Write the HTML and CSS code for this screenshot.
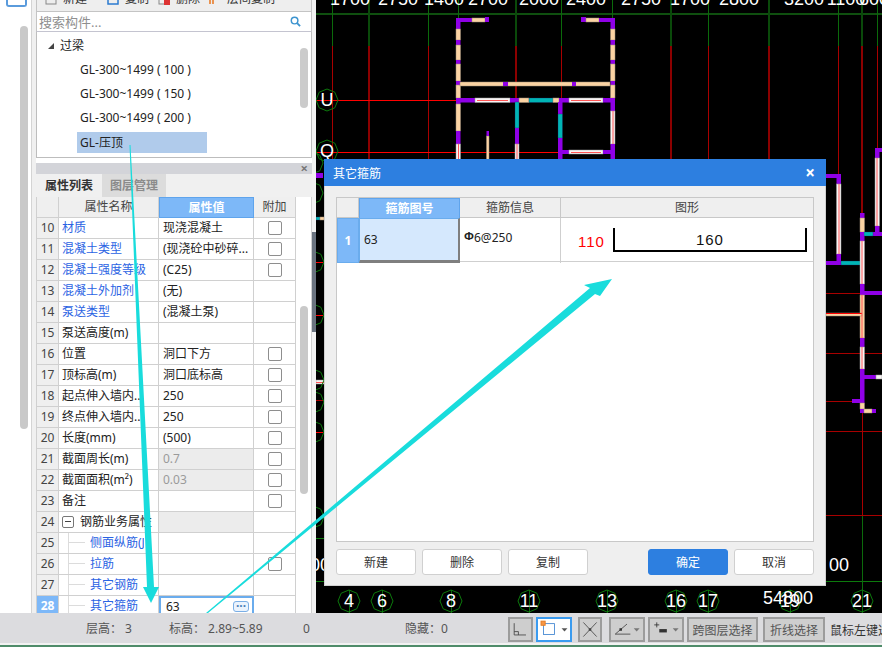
FILE: index.html
```html
<!DOCTYPE html>
<html lang="zh">
<head>
<meta charset="utf-8">
<title>其它箍筋</title>
<link rel="stylesheet" href="styles.css">
</head>
<body>
<div class="app">
  <div class="main">
    <div class="rail">
      <div class="rail-icon"></div>
      <div class="rail-thumb"></div>
    </div>
    <div class="panel">
      <div class="toolbar">
        <span class="tool tool-new"><svg class="ti" viewBox="0 0 12 12"><rect x="1" y="1" width="10" height="10" fill="none" stroke="#888"/></svg>新建</span>
        <span class="tool tool-copy"><svg class="ti" viewBox="0 0 12 12"><rect x="1" y="1" width="10" height="10" fill="none" stroke="#2a7ad0" stroke-width="1.5"/></svg>复制</span>
        <span class="tool tool-del"><svg class="ti" viewBox="0 0 12 12"><rect x="1" y="1" width="8" height="10" fill="none" stroke="#888"/><rect x="6" y="6" width="6" height="6" fill="#d33"/></svg>删除</span>
        <span class="tool tool-floor"><svg class="ti" viewBox="0 0 12 12"><path d="M1 11V1h7M4 11V5h8" fill="none" stroke="#e8761e" stroke-width="1.5"/></svg>层间复制</span>
      </div>
      <div class="search">
        <span>搜索构件...</span>
        <svg class="search-icon" viewBox="0 0 12 12"><circle cx="5" cy="5" r="3.6" fill="none" stroke="#3d94cf" stroke-width="1.6"/><path d="M7.8 7.8L11 11" stroke="#3d94cf" stroke-width="2"/></svg>
      </div>
      <div class="tree">
        <div class="tree-root"><i class="tri"></i>过梁</div>
        <div class="tree-item">GL-300~1499 ( 100 )</div>
        <div class="tree-item">GL-300~1499 ( 150 )</div>
        <div class="tree-item">GL-300~1499 ( 200 )</div>
        <div class="tree-item tree-sel">GL-压顶</div>
        <div class="tree-thumb"></div>
      </div>
      <div class="pane-head"><span class="pane-x">×</span></div>
      <div class="tabs">
        <div class="tab tab-on">属性列表</div>
        <div class="tab">图层管理</div>
      </div>
      <div class="grid-wrap">
        <div class="grid">
          <div class="row head"><div class="n"></div><div class="c">属性名称</div><div class="c hv">属性值</div><div class="c x">附加</div></div>
          <div class="row"><div class="n">10</div><div class="c link">材质</div><div class="c v">现浇混凝土</div><div class="c x"><i class="cb"></i></div></div>
          <div class="row"><div class="n">11</div><div class="c link">混凝土类型</div><div class="c v">(现浇砼中砂碎...</div><div class="c x"><i class="cb"></i></div></div>
          <div class="row"><div class="n">12</div><div class="c link">混凝土强度等级</div><div class="c v">(C25)</div><div class="c x"><i class="cb"></i></div></div>
          <div class="row"><div class="n">13</div><div class="c link">混凝土外加剂</div><div class="c v">(无)</div><div class="c x"></div></div>
          <div class="row"><div class="n">14</div><div class="c link">泵送类型</div><div class="c v">(混凝土泵)</div><div class="c x"></div></div>
          <div class="row"><div class="n">15</div><div class="c">泵送高度(m)</div><div class="c v"></div><div class="c x"></div></div>
          <div class="row"><div class="n">16</div><div class="c">位置</div><div class="c v">洞口下方</div><div class="c x"><i class="cb"></i></div></div>
          <div class="row"><div class="n">17</div><div class="c">顶标高(m)</div><div class="c v">洞口底标高</div><div class="c x"><i class="cb"></i></div></div>
          <div class="row"><div class="n">18</div><div class="c">起点伸入墙内...</div><div class="c v">250</div><div class="c x"><i class="cb"></i></div></div>
          <div class="row"><div class="n">19</div><div class="c">终点伸入墙内...</div><div class="c v">250</div><div class="c x"><i class="cb"></i></div></div>
          <div class="row"><div class="n">20</div><div class="c">长度(mm)</div><div class="c v">(500)</div><div class="c x"><i class="cb"></i></div></div>
          <div class="row"><div class="n">21</div><div class="c">截面周长(m)</div><div class="c v off">0.7</div><div class="c x"><i class="cb"></i></div></div>
          <div class="row"><div class="n">22</div><div class="c">截面面积(m²)</div><div class="c v off">0.03</div><div class="c x"><i class="cb"></i></div></div>
          <div class="row"><div class="n">23</div><div class="c">备注</div><div class="c v"></div><div class="c x"><i class="cb"></i></div></div>
          <div class="row"><div class="n">24</div><div class="c group"><i class="minus"></i><span class="clip clip-g">钢筋业务属性</span></div><div class="c off"></div><div class="c x"></div></div>
          <div class="row"><div class="n">25</div><div class="c sub link"><i class="branch"></i><span class="clip clip-s">侧面纵筋(J...</span></div><div class="c v"></div><div class="c x"></div></div>
          <div class="row"><div class="n">26</div><div class="c sub link"><i class="branch"></i>拉筋</div><div class="c v"></div><div class="c x"><i class="cb"></i></div></div>
          <div class="row"><div class="n">27</div><div class="c sub link"><i class="branch"></i>其它钢筋</div><div class="c v"></div><div class="c x"></div></div>
          <div class="row"><div class="n nsel">28</div><div class="c sub link"><i class="branch"></i>其它箍筋</div><div class="c edit">63<i class="dots">···</i></div><div class="c x"></div></div>
        </div>
        <div class="grid-thumb"></div>
      </div>
    </div>
    <div class="splitter"><div class="split-thumb"></div></div>
    <svg class="canvas" viewBox="316 0 566 613" width="566" height="613">
      <defs>
        <polygon id="oct" points="11,0 7.8,7.8 0,11 -7.8,7.8 -11,0 -7.8,-7.8 0,-11 7.8,-7.8" fill="none" stroke="#0c7a0c"/>
      </defs>
      <g class="grn1">
        <path d="M316 14H882"/>
        <path d="M316 581.500H882" class="thin"/>
        <path d="M316 538.500H325" class="thin"/>
      </g>
      <g class="gv">
        <path d="M332.500 0V46M428.500 0V46M458.500 0V46M561.500 0V46M612.500 0V46M708.500 0V46M838.500 0V46M877.500 0V46"/>
        <path class="thick" d="M369 0V46M516 0V46M671 0V46M769 0V46M862 0V46"/>
        <path d="M349.500 590V613M382.500 590V613M451.500 590V613M529.500 590V613M607.500 590V613M676.500 590V613M708.500 590V613M790.500 590V613M862.500 516V613"/>
      </g>
      <g class="rv">
        <path d="M332.500 46V160M428.500 46V160M561.500 46V160M612.500 46V160M708.500 46V160M838.500 46V175M877.500 46V148"/>
        <path class="thick" d="M369 46V160M516 46V160M671 46V160M769 46V160M862 46V213"/>
        <path d="M862.500 413V516M826 293.500H860M826 401.500H852M826 431.500H882M826 515.500H882M826 353.500H882M316 400.500H324"/>
      </g>
      <g class="rh"><path d="M316 100.500H612M316 152.500H612"/></g>
      <g>
        <rect class="p" x="456" y="18" width="16" height="4"/><rect class="o" x="472" y="18" width="13" height="4"/><rect class="p" x="485" y="17" width="4" height="5"/>
        <rect class="p" x="581" y="17" width="5" height="5"/><rect class="o" x="586" y="18" width="13" height="4"/><rect class="p" x="599" y="18" width="16" height="4"/>
        <rect class="p" x="456" y="18" width="4.500" height="11"/><rect class="o" x="456" y="29" width="4.500" height="11"/><rect class="p" x="456" y="40" width="4.500" height="5"/><rect class="o" x="456" y="45" width="4.500" height="15"/><rect class="p" x="456" y="60" width="4.500" height="4"/><rect class="o" x="456" y="64" width="4.500" height="17"/><rect class="p" x="456" y="81" width="4.500" height="4"/><rect class="o" x="456" y="85" width="4.500" height="13"/><rect class="p" x="456" y="98" width="4.500" height="6"/><rect class="o" x="456" y="104" width="4.500" height="27"/><rect class="p" x="456" y="131" width="4.500" height="13"/><rect class="w" x="456" y="144" width="4.500" height="16"/>
        <rect class="p" x="610.500" y="18" width="4.500" height="11"/><rect class="o" x="610.500" y="29" width="4.500" height="11"/><rect class="p" x="610.500" y="40" width="4.500" height="5"/><rect class="o" x="610.500" y="45" width="4.500" height="15"/><rect class="p" x="610.500" y="60" width="4.500" height="4"/><rect class="o" x="610.500" y="64" width="4.500" height="17"/><rect class="p" x="610.500" y="81" width="4.500" height="4"/><rect class="o" x="610.500" y="85" width="4.500" height="13"/><rect class="p" x="610.500" y="98" width="4.500" height="13"/><rect class="w" x="610.500" y="111" width="4.500" height="33"/><rect class="p" x="610.500" y="144" width="4.500" height="16"/>
        <rect class="o" x="460" y="82" width="150" height="4"/><rect class="p" x="503" y="82" width="5" height="4"/><rect class="p" x="572" y="82" width="4" height="4"/>
        <rect class="p" x="456" y="98" width="19" height="4.500"/><rect class="w" x="475" y="98" width="35" height="4.500"/><rect class="p" x="510" y="98" width="9" height="4.500"/><rect class="o" x="519" y="98" width="10" height="4.500"/><rect class="t" x="529" y="98" width="24" height="4.500"/><rect class="o" x="553" y="98" width="6" height="4.500"/><rect class="p" x="559" y="98" width="10" height="4.500"/><rect class="w" x="569" y="98" width="34" height="4.500"/><rect class="p" x="603" y="98" width="12" height="4.500"/>
        <rect class="t" x="515" y="102" width="4" height="26"/><rect class="p" x="515" y="128" width="4" height="16"/><rect class="w" x="515" y="144" width="4" height="16"/>
        <rect class="p" x="558" y="102" width="4.500" height="12"/><rect class="t" x="558" y="114" width="4.500" height="24"/><rect class="p" x="558" y="138" width="4.500" height="22"/>
        <rect class="o" x="486.500" y="136" width="2.500" height="24"/><rect class="p" x="486.500" y="131" width="2.500" height="5"/>
        <rect class="p" x="558" y="150" width="11" height="4"/><rect class="w" x="569" y="150" width="34" height="4"/><rect class="p" x="603" y="150" width="12" height="4"/>
        <rect class="p" x="826" y="174" width="15" height="4"/><rect class="p" x="836.500" y="174" width="4.500" height="10"/><rect class="w" x="836.500" y="184" width="4.500" height="70"/><rect class="p" x="836.500" y="254" width="4.500" height="9"/><rect class="p" x="826" y="261" width="15" height="4"/><rect class="t" x="841" y="261" width="22" height="4"/>
        <rect class="p" x="860" y="213" width="4.500" height="5"/><rect class="o" x="860" y="218" width="4.500" height="14"/><rect class="p" x="860" y="232" width="4.500" height="9"/><rect class="w" x="860" y="241" width="4.500" height="43"/>
        <rect class="p" x="860" y="284" width="4.500" height="11"/><rect class="p" x="864" y="291" width="18" height="4"/><rect class="o" x="860" y="295" width="4.500" height="43"/><rect class="p" x="860" y="338" width="4.500" height="9"/><rect class="w" x="860" y="347" width="4.500" height="22"/><rect class="p" x="860" y="369" width="4.500" height="34"/><rect class="p" x="864" y="375" width="12" height="4"/><rect class="w" x="876" y="375" width="6" height="4"/><rect class="p" x="852" y="399" width="10" height="4"/><rect class="o" x="860" y="403" width="4.500" height="6"/><rect class="p" x="860" y="409" width="4.500" height="4"/><rect class="o" x="864" y="409" width="8" height="4"/><rect class="p" x="872" y="409" width="4" height="4"/>
        <rect class="o" x="826" y="313" width="36" height="3"/><rect class="rbar" x="826" y="313" width="36" height="1"/>
        <rect class="p" x="875" y="148" width="7" height="4"/><rect class="p" x="875" y="148" width="4.500" height="10"/><rect class="w" x="875" y="158" width="4.500" height="68"/><rect class="p" x="875" y="226" width="4.500" height="10"/><rect class="p" x="873" y="232" width="9" height="4"/><rect class="t" x="864" y="232" width="9" height="4"/>
        <rect class="p" x="860" y="232" width="4" height="4"/>
        <rect class="p" x="316" y="173" width="7" height="5"/><rect class="t" x="316" y="217" width="4" height="3"/><rect class="o" x="320" y="217" width="4" height="3"/><rect class="w" x="316" y="380" width="8" height="4"/>
      </g>
      <g class="red-mid">
        <path d="M458.500 144V160M613 111V144M517 144V160M571 100.500H601M571 152.500H601M477 100.500H508M839 184V254M862 241V284M877 158V226M862 295V338M862 347V369M316 382.500H324"/>
      </g>
      <g>
        <use href="#oct" x="327" y="100"/><use href="#oct" x="327" y="151"/>
        <use href="#oct" x="312" y="163"/><use href="#oct" x="312" y="193"/><use href="#oct" x="313" y="262"/><use href="#oct" x="313" y="315"/><use href="#oct" x="313" y="380"/><use href="#oct" x="313" y="402"/><use href="#oct" x="313" y="432"/><use href="#oct" x="313" y="517"/>
        <use href="#oct" x="349" y="601"/><use href="#oct" x="382" y="601"/><use href="#oct" x="451" y="601"/><use href="#oct" x="529" y="601"/><use href="#oct" x="607" y="601"/><use href="#oct" x="676" y="601"/><use href="#oct" x="708" y="601"/><use href="#oct" x="790" y="601"/><use href="#oct" x="862" y="601"/>
      </g>
      <g class="ticks"><path d="M316 262.500H323M316 315.500H323M316 432.500H323"/></g>
      <g class="dim">
        <text x="350" y="5">1700</text><text x="398" y="5">2750</text><text x="444" y="5">1400</text><text x="488" y="5">2700</text><text x="539" y="5">2000</text><text x="586" y="5">2400</text><text x="641" y="5">2750</text><text x="690" y="5">1700</text><text x="739" y="5">2800</text><text x="804" y="5">3200</text><text x="846" y="5">1100</text><text x="874" y="5">600</text>
        <text x="327" y="106">U</text><text x="327" y="157">Q</text>
        <text x="349" y="607">4</text><text x="382" y="607">6</text><text x="451" y="607">8</text><text x="529" y="607">11</text><text x="607" y="607">13</text><text x="676" y="607">16</text><text x="708" y="607">17</text><text x="790" y="607">19</text><text x="862" y="607">21</text>
        <text x="788" y="604">54800</text><text x="839" y="571">00</text><text x="320" y="571">00</text>
      </g>
    </svg>
  </div>

  <div class="status">
    <span class="st st-h">层高： 3</span>
    <span class="st st-e">标高： 2.89~5.89</span>
    <span class="st st-z">0</span>
    <span class="st st-hide">隐藏：0</span>
    <div class="st-tools">
      <button class="sb sb-1"><svg viewBox="0 0 25 25"><path d="M5 5V19H19M5 15H10V19" fill="none" stroke="#444"/></svg></button>
      <button class="sb sb-2"><svg viewBox="0 0 36 25"><rect x="5.500" y="5.500" width="13" height="13" fill="none" stroke="#3d83d0"/><rect x="2.500" y="2.500" width="5" height="5" fill="#f79646" stroke="#e07a20"/><path d="M27 11h7l-3.500 4z" fill="#555"/></svg></button>
      <button class="sb sb-3"><svg viewBox="0 0 24 25"><path d="M4 4L20 21M20 4L4 21" stroke="#444" fill="none"/><rect x="10.500" y="11" width="3" height="3" fill="#444"/></svg></button>
      <button class="sb sb-4"><svg viewBox="0 0 36 25"><path d="M4 18H22M4 18L18 6" stroke="#444" fill="none"/><rect x="9" y="11" width="3" height="3" fill="#333"/><path d="M26 11h7l-3.500 4z" fill="#777"/></svg></button>
      <button class="sb sb-5"><svg viewBox="0 0 36 25"><path d="M7 4V10M4 7H10" stroke="#333" fill="none"/><rect x="10" y="12" width="9" height="4" fill="#333"/><path d="M26 11h7l-3.500 4z" fill="#777"/></svg></button>
      <button class="sb sb-t sb-6">跨图层选择</button>
      <button class="sb sb-t sb-7">折线选择</button>
      <span class="hint">鼠标左键选择</span>
    </div>
  </div>
  <div class="footer"></div>

  <section class="dialog">
    <header class="dlg-title"><span>其它箍筋</span><span class="dlg-x">×</span></header>
    <div class="dlg-body">
      <div class="dlg-table">
        <div class="dt-head">
          <div class="dh dh-n"></div>
          <div class="dh dh-sel">箍筋图号</div>
          <div class="dh">箍筋信息</div>
          <div class="dh dh-last">图形</div>
        </div>
        <div class="dt-row">
          <div class="dn">1</div>
          <div class="dc dc-sel">63</div>
          <div class="dc dc-info"><span class="rebar">Φ</span>6@250</div>
          <div class="dc dc-fig">
            <span class="fig-a">110</span>
            <div class="fig-shape">160</div>
          </div>
        </div>
      </div>
      <div class="dlg-btns">
        <button class="btn">新建</button>
        <button class="btn">删除</button>
        <button class="btn">复制</button>
        <button class="btn btn-ok">确定</button>
        <button class="btn">取消</button>
      </div>
    </div>
  </section>

  <svg class="arrows" viewBox="0 0 882 647" width="882" height="647">
    <polygon points="129.500,145 130.500,145 154,587 159,587 151,603 143,587 147,587"/>
    <polygon points="206,613 208,613 595,294 600,296 612,279 584,285 590,288"/>
  </svg>
</div>
</body>
</html>
```

FILE: styles.css
```css
* { box-sizing: border-box; }
html, body { margin: 0; padding: 0; }
body { font-family: "Noto Sans", "Noto Sans CJK SC", sans-serif; font-size: 12px; color: #222; background: #fff; }
.app { position: relative; width: 882px; height: 647px; overflow: hidden; background: #f3f3f3; }
.main { display: flex; height: 613px; overflow: hidden; }

.rail { width: 36px; flex: none; background: #fff; position: relative; display: flex; flex-direction: column; align-items: flex-start; border-right: 4px solid #f0f0f0; box-shadow: inset -1px 0 0 #d4d4d4; }
.rail-icon { width: 21px; height: 8px; margin: -1px 0 0 6px; border: 2px solid #5a9bdc; border-top: 0; border-radius: 0 0 3px 3px; }
.rail-thumb { width: 8px; height: 403px; margin: 19px 0 0 20px; background: #c9c9c9; border-radius: 4px; }

.panel { width: 276px; flex: none; display: flex; flex-direction: column; background: #fff; }
.toolbar { position: relative; height: 12px; background: #eeeeee; display: flex; overflow: hidden; border-bottom: 1px solid #c4c4c4; border-left: 1px solid #c4c4c4; border-right: 1px solid #c4c4c4; }
.tool { display: flex; align-items: center; height: 12px; margin-top: -7px; color: #333; line-height: 12px; white-space: nowrap; gap: 6px; }
.ti { width: 12px; height: 12px; flex: none; }
.tool-new { margin-left: 8px; width: 62px; }
.tool-copy { width: 51px; }
.tool-del { width: 51px; }
.tool-floor { width: 70px; }
.search { height: 19px; padding: 0 2px; display: flex; align-items: center; justify-content: space-between; color: #8f8f8f; font-size: 13px; border-right: 1px solid #c4c4c4; border-left: 1px solid #c4c4c4; }
.search-icon { width: 11px; height: 11px; margin-right: 8px; }
.tree { position: relative; height: 127px; border: 1px solid #bdbdbd; border-top-color: #c4c4d0; padding-top: 2px; }
.tree-root { height: 24px; line-height: 23px; padding-left: 23px; font-size: 12px; position: relative; }
.tri { position: absolute; left: 11px; top: 9px; width: 0; height: 0; border-style: solid; border-width: 0 0 6px 6px; border-color: transparent transparent #444 transparent; }
.tree-item { height: 24px; line-height: 23px; padding-left: 43px; white-space: nowrap; font-size: 12px; }
.tree-sel { width: 130px; height: 21px; margin: 2px 0 0 40px; padding-left: 3px; background: #b0cbeb; line-height: 21px; }
.tree-thumb { position: absolute; right: 3px; top: 16px; width: 8px; height: 60px; background: #cbcbcb; border-radius: 4px; }
.pane-head { margin-top: 5px; height: 11px; background: #d3d4d9; position: relative; text-align: right; padding-right: 4px; color: #777; font-size: 13px; line-height: 10px; font-weight: bold; flex: none; }
.pane-x { display: inline-block; }
.tabs { display: flex; height: 23px; flex: none; background: #f0f0f0; padding-left: 1px; gap: 1px; }
.tab { width: 64px; text-align: center; line-height: 23px; color: #8b8b8b; background: #dcdcdc; font-weight: bold; font-size: 12px; }
.tab-on { color: #333; background: #f0f0f0; }
.grid-wrap { position: relative; flex: 1; min-height: 0; overflow: hidden; border-left: 1px solid #d0d0d0; border-right: 1px solid #d0d0d0; }
.grid { width: 259px; }
.row { display: grid; grid-template-columns: 22px 100px 95px 42px; height: 21px; line-height: 20px; font-size: 12px; }
.n { background: #efefef; border-right: 1px solid #d0d0d0; border-bottom: 1px solid #d0d0d0; text-align: center; color: #444; }
.c { border-right: 1px solid #d0d0d0; border-bottom: 1px solid #d0d0d0; padding-left: 3px; white-space: nowrap; overflow: hidden; background: #fff; position: relative; }
.v { padding-left: 4px; }
.head .c { background: #efefef; text-align: center; color: #444; padding-left: 0; }
.head { line-height: 20px; }
.head .hv { background: #7db8f8; color: #fff; font-weight: bold; border: 1px solid #5fa4ec; }
.link { color: #2b63e3; }
.x { display: flex; justify-content: center; align-items: center; padding: 0; }
.cb { display: block; width: 14px; height: 14px; border: 1px solid #8e8e8e; border-radius: 2px; background: #fff; }
.off { background: #ececec; color: #9a9a9a; }
.group { padding-left: 21px; }
.clip { display: block; overflow: hidden; }
.clip-g { width: 72px; }
.clip-s { width: 54px; }
.minus { position: absolute; left: 3px; top: 4px; width: 12px; height: 12px; border: 1px solid #777; border-radius: 2px; }
.minus::after { content: ""; position: absolute; left: 2px; top: 4px; width: 6px; height: 1px; background: #444; }
.sub { padding-left: 31px; }
.branch { position: absolute; left: 9px; top: 0; bottom: 0; width: 16px; border-left: 1px solid #dcdcdc; }
.branch::after { content: ""; position: absolute; left: 0; top: 9px; width: 16px; height: 1px; background: #dcdcdc; }
.nsel { background: #7db8f8; color: #fff; font-weight: bold; }
.edit { border: 2px solid #6aaced; border-bottom: 0; padding-left: 5px; line-height: 18px; }
.dots { position: absolute; right: 3px; top: 3px; width: 16px; height: 11px; line-height: 8px; border: 1px solid #7aaee5; border-radius: 3px; background: #eaf3fd; text-align: center; color: #4a7fb8; font-style: normal; font-size: 12px; font-weight: bold; }
.grid-thumb { position: absolute; left: 263px; top: 109px; width: 8px; height: 188px; background: #c9c9c9; border-radius: 4px; }

.splitter { width: 4px; flex: none; position: relative; background: #f2f2f2; }
.split-thumb { position: absolute; left: 0; top: 232px; width: 4px; height: 100px; background: #6b7480; }
.canvas { display: block; flex: none; background: #000; }
.grn1 path { stroke: #0f4f0f; stroke-width: 2; fill: none; }
.grn1 .thin { stroke: #0c7a0c; stroke-width: 1; }
.gv path { stroke: #0b6a0b; stroke-width: 1; fill: none; }
.gv .thick { stroke: #0a4a0a; stroke-width: 2; }
.rv path { stroke: #a80000; stroke-width: 1; fill: none; }
.rv .thick { stroke: #8c0000; stroke-width: 2; }
.rh path { stroke: #f00; stroke-width: 1; fill: none; }
.ticks path { stroke: #f00; stroke-width: 1; fill: none; }
.red-mid path { stroke: #f55; stroke-width: 1; fill: none; }
.rbar { fill: #f00; }
.p { fill: #8f00e6; }
.o { fill: #fbd3a3; stroke: #9a8a78; stroke-width: .5; }
.w { fill: #f8f4f4; stroke: #999; stroke-width: .5; }
.t { fill: #00b5b5; stroke: #226; stroke-width: .3; }
.dim text { fill: #fff; font-family: "Liberation Sans", sans-serif; font-size: 18px; text-anchor: middle; }

.status { position: relative; height: 30px; background: #dcdcdf; display: flex; align-items: center; overflow: hidden; white-space: nowrap; color: #555; font-size: 12px; }
.st { flex: none; }
.st-h { margin-left: 86px; width: 83px; }
.st-e { width: 134px; }
.st-z { width: 102px; }
.st-hide { width: 103px; }
.st-tools { display: flex; align-items: center; height: 25px; flex: none; margin-top: 3px; }
.sb { flex: none; height: 25px; padding: 0; margin: 0; border: 2px solid #9c9c9c; background: #cecece; display: flex; align-items: center; justify-content: center; font: inherit; color: #555; font-size: 12px; }
.sb svg { display: block; width: 100%; height: 100%; }
.sb-1 { width: 25px; margin-right: 3px; }
.sb-2 { width: 36px; margin-right: 6px; background: #fff; border-color: #3a9bf0; }
.sb-3 { width: 24px; margin-right: 7px; }
.sb-4 { width: 36px; margin-right: 3px; }
.sb-5 { width: 36px; margin-right: 3px; }
.sb-6 { width: 71px; margin-right: 5px; }
.sb-7 { width: 62px; margin-right: 5px; }
.hint { color: #333; }
.footer { height: 4px; background: #4f8c6a; border-top: 2px solid #f2f2f2; }

.dialog { position: absolute; left: 324px; top: 159px; width: 502px; height: 427px; background: #efefef; border: 1px solid #d0d0d0; border-top: 0; display: flex; flex-direction: column; }
.dlg-title { height: 27px; flex: none; margin: 0 -1px; background: #2d7fe0; color: #fff; display: flex; justify-content: space-between; align-items: center; padding: 0 11px 0 9px; font-size: 12px; }
.dlg-x { font-size: 17px; font-weight: bold; line-height: 17px; }
.dlg-body { flex: 1; display: flex; flex-direction: column; padding: 11px 11px 10px; min-height: 0; }
.dlg-table { height: 345px; background: #fff; border: 1px solid #c8c8c8; flex: none; }
.dt-head { display: grid; grid-template-columns: 22px 101px 101px 1fr; height: 20px; background: #efefef; border-bottom: 1px solid #c8c8c8; }
.dh { border-right: 1px solid #c8c8c8; text-align: center; line-height: 19px; font-size: 12px; color: #444; }
.dh-sel { background: #7db8f8; color: #fff; font-weight: bold; border: 1px solid #5fa4ec; }
.dh-last { border-right: 0; }
.dt-row { display: grid; grid-template-columns: 22px 101px 101px 1fr; height: 44px; border-bottom: 1px solid #cfcfcf; }
.dn { background: #7db8f8; color: #fff; font-weight: bold; text-align: center; line-height: 43px; font-size: 12px; border: 1px solid #6aaced; }
.dc { padding-left: 4px; line-height: 43px; font-size: 12px; border-right: 1px solid #cfcfcf; }
.dc-sel { background: #d5e8fd; border: 1px solid #6aaced; border-bottom: 3px solid #7f7f7f; border-right: 2px solid #7f7f7f; line-height: 41px; }
.dc-info { line-height: 39px; }
.rebar { display: inline-block; width: 10px; font-size: 11px; font-weight: bold; line-height: 11px; position: relative; top: -2px; }
.dc-fig { border-right: 0; padding: 10px 6px 0 17px; display: flex; align-items: flex-start; gap: 8px; }
.fig-a { color: #f00; font-family: "Liberation Sans", sans-serif; font-size: 15px; letter-spacing: 1px; line-height: 30px; margin-top: -1px; }
.fig-shape { flex: 1; height: 24px; border: 2px solid #000; border-top: 0; text-align: center; line-height: 23px; font-family: "Liberation Sans", sans-serif; font-size: 15px; letter-spacing: 1px; color: #111; }
.dlg-btns { display: flex; gap: 6px; margin-top: 7px; }
.btn { width: 80px; height: 26px; padding: 0; background: #fff; border: 1px solid #d0d0d0; border-radius: 3px; font: inherit; font-size: 12px; color: #333; }
.btn-ok { margin-left: 54px; background: #2d7fe0; border-color: #2d7fe0; color: #fff; }

.arrows { position: absolute; left: 0; top: 0; pointer-events: none; }
.arrows polygon { fill: #19dcdc; }
```
